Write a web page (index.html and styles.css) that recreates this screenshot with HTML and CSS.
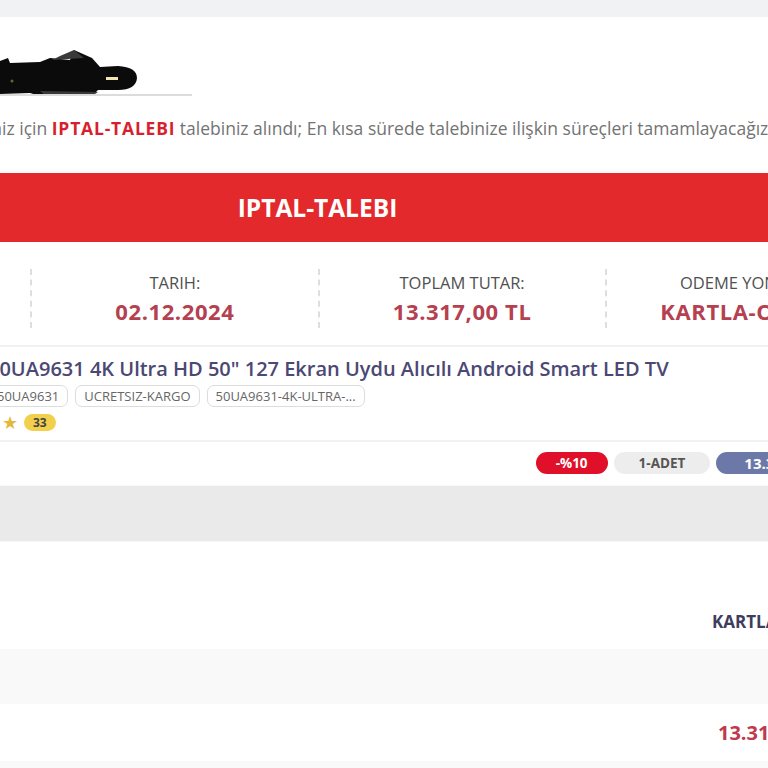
FILE: index.html
```html
<html>
<head>
    <title>Siparis Durumu</title>
    <link rel="stylesheet" href="styles.css">
</head>
<body>
    <div class="topbar"></div>
    <div class="page">
        <div class="greeting">
            <div class="name">
                <svg width="140" height="52" viewBox="0 0 140 52">
                    <path d="M0 16 L8 13 L10 18 L40 17 L50 13 L70 15 L74 5 L92 13 L100 22 L118 21 Q137 22 137 33 Q136 45 118 45 L98 45 L92 51 L40 51 L30 48 L0 49 Z" fill="#0b0b0b"/>
                    <path d="M52 15 L60 11 L74 5 L84 13 Z M40 46 L98 47 L92 51 L46 51 Z" fill="#3a3a3a"/>
                    <rect x="106" y="32" width="12" height="3" fill="#f2e6b0"/>
                    <circle cx="12" cy="36" r="1.5" fill="#6b6432"/>
                </svg>
            </div>
            <p class="message">Sayın müşterimiz, 2024120212 numaralı siparişiniz için <strong>IPTAL-TALEBI</strong> talebiniz alındı; En kısa sürede talebinize ilişkin süreçleri tamamlayacağız.</p>
        </div>

        <div class="status">IPTAL-TALEBI</div>

        <div class="info">
            <div class="info-col">
                <span class="info-label">SIPARIS NO:</span>
                <span class="info-value">2024120212</span>
            </div>
            <div class="info-col">
                <span class="info-label">TARIH:</span>
                <span class="info-value">02.12.2024</span>
            </div>
            <div class="info-col">
                <span class="info-label">TOPLAM TUTAR:</span>
                <span class="info-value">13.317,00 TL</span>
            </div>
            <div class="info-col">
                <span class="info-label">ODEME YONTEMI:</span>
                <span class="info-value">KARTLA-ODEME</span>
            </div>
        </div>

        <div class="product">
            <div class="product-thumb"></div>
            <div class="product-body">
                <div class="product-title">50UA9631 4K Ultra HD 50" 127 Ekran Uydu Alıcılı Android Smart LED TV</div>
                <div class="tags">
                    <span class="tag">50UA9631</span>
                    <span class="tag">UCRETSIZ-KARGO</span>
                    <span class="tag">50UA9631-4K-ULTRA-...</span>
                </div>
                <div class="rating">
                    <span class="star">★</span>
                    <span class="rating-count">33</span>
                </div>
            </div>
        </div>

        <div class="price-row">
            <span class="pill pill-discount">-%10</span>
            <span class="pill pill-qty">1-ADET</span>
            <span class="pill pill-price">13.317,00 TL</span>
        </div>

        <div class="band"></div>

        <div class="summary">
            <div class="summary-row">
                <span class="summary-label">Ödeme Yöntemi</span>
                <span class="summary-method">KARTLA-ODEME</span>
            </div>
            <div class="summary-row summary-row-alt"></div>
            <div class="summary-row summary-row-short">
                <span class="summary-label">Toplam</span>
                <span class="summary-total">13.317,00 TL</span>
            </div>
            <div class="summary-row summary-row-alt"></div>
        </div>
    </div>
</body>
</html>
```

FILE: styles.css
```css
body {
    font-family: "Open Sans", "Noto Sans", sans-serif;
    margin: 0;
    background-color: #fff;
    overflow: hidden;
    height: 768px;
}

.topbar {
    height: 17px;
    background-color: #f1f2f4;
}

.page {
    width: 1149px;
    margin-left: -257px;
}

.greeting {
    padding: 28px 0 0 257px;
    height: 156px;
    box-sizing: border-box;
}

.name {
    width: 192px;
    height: 49px;
    border-bottom: 2px solid #dcdcdc;
    overflow: hidden;
}

.name svg {
    display: block;
}

.message {
    margin: 20px 0 0 -397px;
    font-size: 17.5px;
    color: #737373;
    white-space: nowrap;
}

.message strong {
    color: #d81f2d;
    font-weight: 700;
    letter-spacing: 0.8px;
}

.status {
    height: 69px;
    line-height: 69px;
    background-color: #e3292b;
    color: #fff;
    font-size: 24.5px;
    font-weight: 700;
    text-align: center;
}

.info {
    display: grid;
    grid-template-columns: repeat(4, 1fr);
    padding: 27px 0 17px;
    border-bottom: 2px solid #f1f1f1;
}

.info-col {
    display: flex;
    flex-direction: column;
    align-items: center;
    border-left: 2px dashed #dedede;
    padding: 0 0 3px;
}

.info-col:first-child {
    border-left: none;
}

.info-label {
    font-size: 16.5px;
    color: #505050;
    line-height: 28px;
}

.info-value {
    font-size: 22px;
    font-weight: 700;
    color: #b5404f;
    line-height: 28px;
    letter-spacing: 0.6px;
}

.product {
    display: flex;
    border-bottom: 2px solid #f1f1f1;
    padding: 8px 0 8px;
}

.product-thumb {
    width: 245px;
}

.product-body {
    display: flex;
    flex-direction: column;
}

.product-title {
    font-size: 20px;
    font-weight: 600;
    color: #4b4874;
    line-height: 28px;
    white-space: nowrap;
}

.tags {
    display: flex;
    gap: 7px;
    margin-top: 2px;
}

.tag {
    font-size: 13px;
    color: #666;
    border: 1px solid #dcdcdc;
    border-radius: 7px;
    padding: 1px 8px;
    line-height: 18px;
}

.rating {
    display: flex;
    align-items: center;
    gap: 6px;
    padding-left: 14px;
    margin-top: 5px;
}

.star {
    color: #e2b93b;
    font-size: 18px;
    line-height: 20px;
}

.rating-count {
    background-color: #f3d04c;
    color: #444;
    font-size: 12px;
    font-weight: 700;
    border-radius: 9px;
    padding: 0 9px;
    line-height: 17px;
}

.price-row {
    display: flex;
    justify-content: flex-end;
    gap: 6px;
    padding: 10px 30px 12px 0;
}

.pill {
    font-size: 13.5px;
    font-weight: 700;
    line-height: 22px;
    border-radius: 11px;
    padding: 0 20px;
}

.pill-discount {
    background-color: #e0102a;
    color: #fff;
}

.pill-qty {
    background-color: #ededed;
    color: #555;
    padding: 0 25px;
}

.pill-price {
    background-color: #6c79a8;
    color: #fff;
    font-size: 15px;
    padding: 0 28px;
}

.band {
    height: 55px;
    background-color: #eaeaea;
    box-shadow: 0 0 2px rgba(0, 0, 0, 0.08);
}

.summary-row {
    display: flex;
    justify-content: space-between;
    align-items: center;
    height: 108px;
    padding: 52px 0 0 0;
    box-sizing: border-box;
}

.summary-row-alt {
    height: 55px;
    background-color: #f9f9f9;
    padding: 0;
}

.summary-row-short {
    height: 57px;
    padding: 0;
}

.summary-label {
    width: 200px;
    font-size: 15px;
    color: #777;
}

.summary-method {
    width: 180px;
    font-size: 17px;
    font-weight: 700;
    color: #3e3d5e;
}

.summary-total {
    width: 174px;
    font-size: 20px;
    font-weight: 700;
    color: #c0394d;
}
```
